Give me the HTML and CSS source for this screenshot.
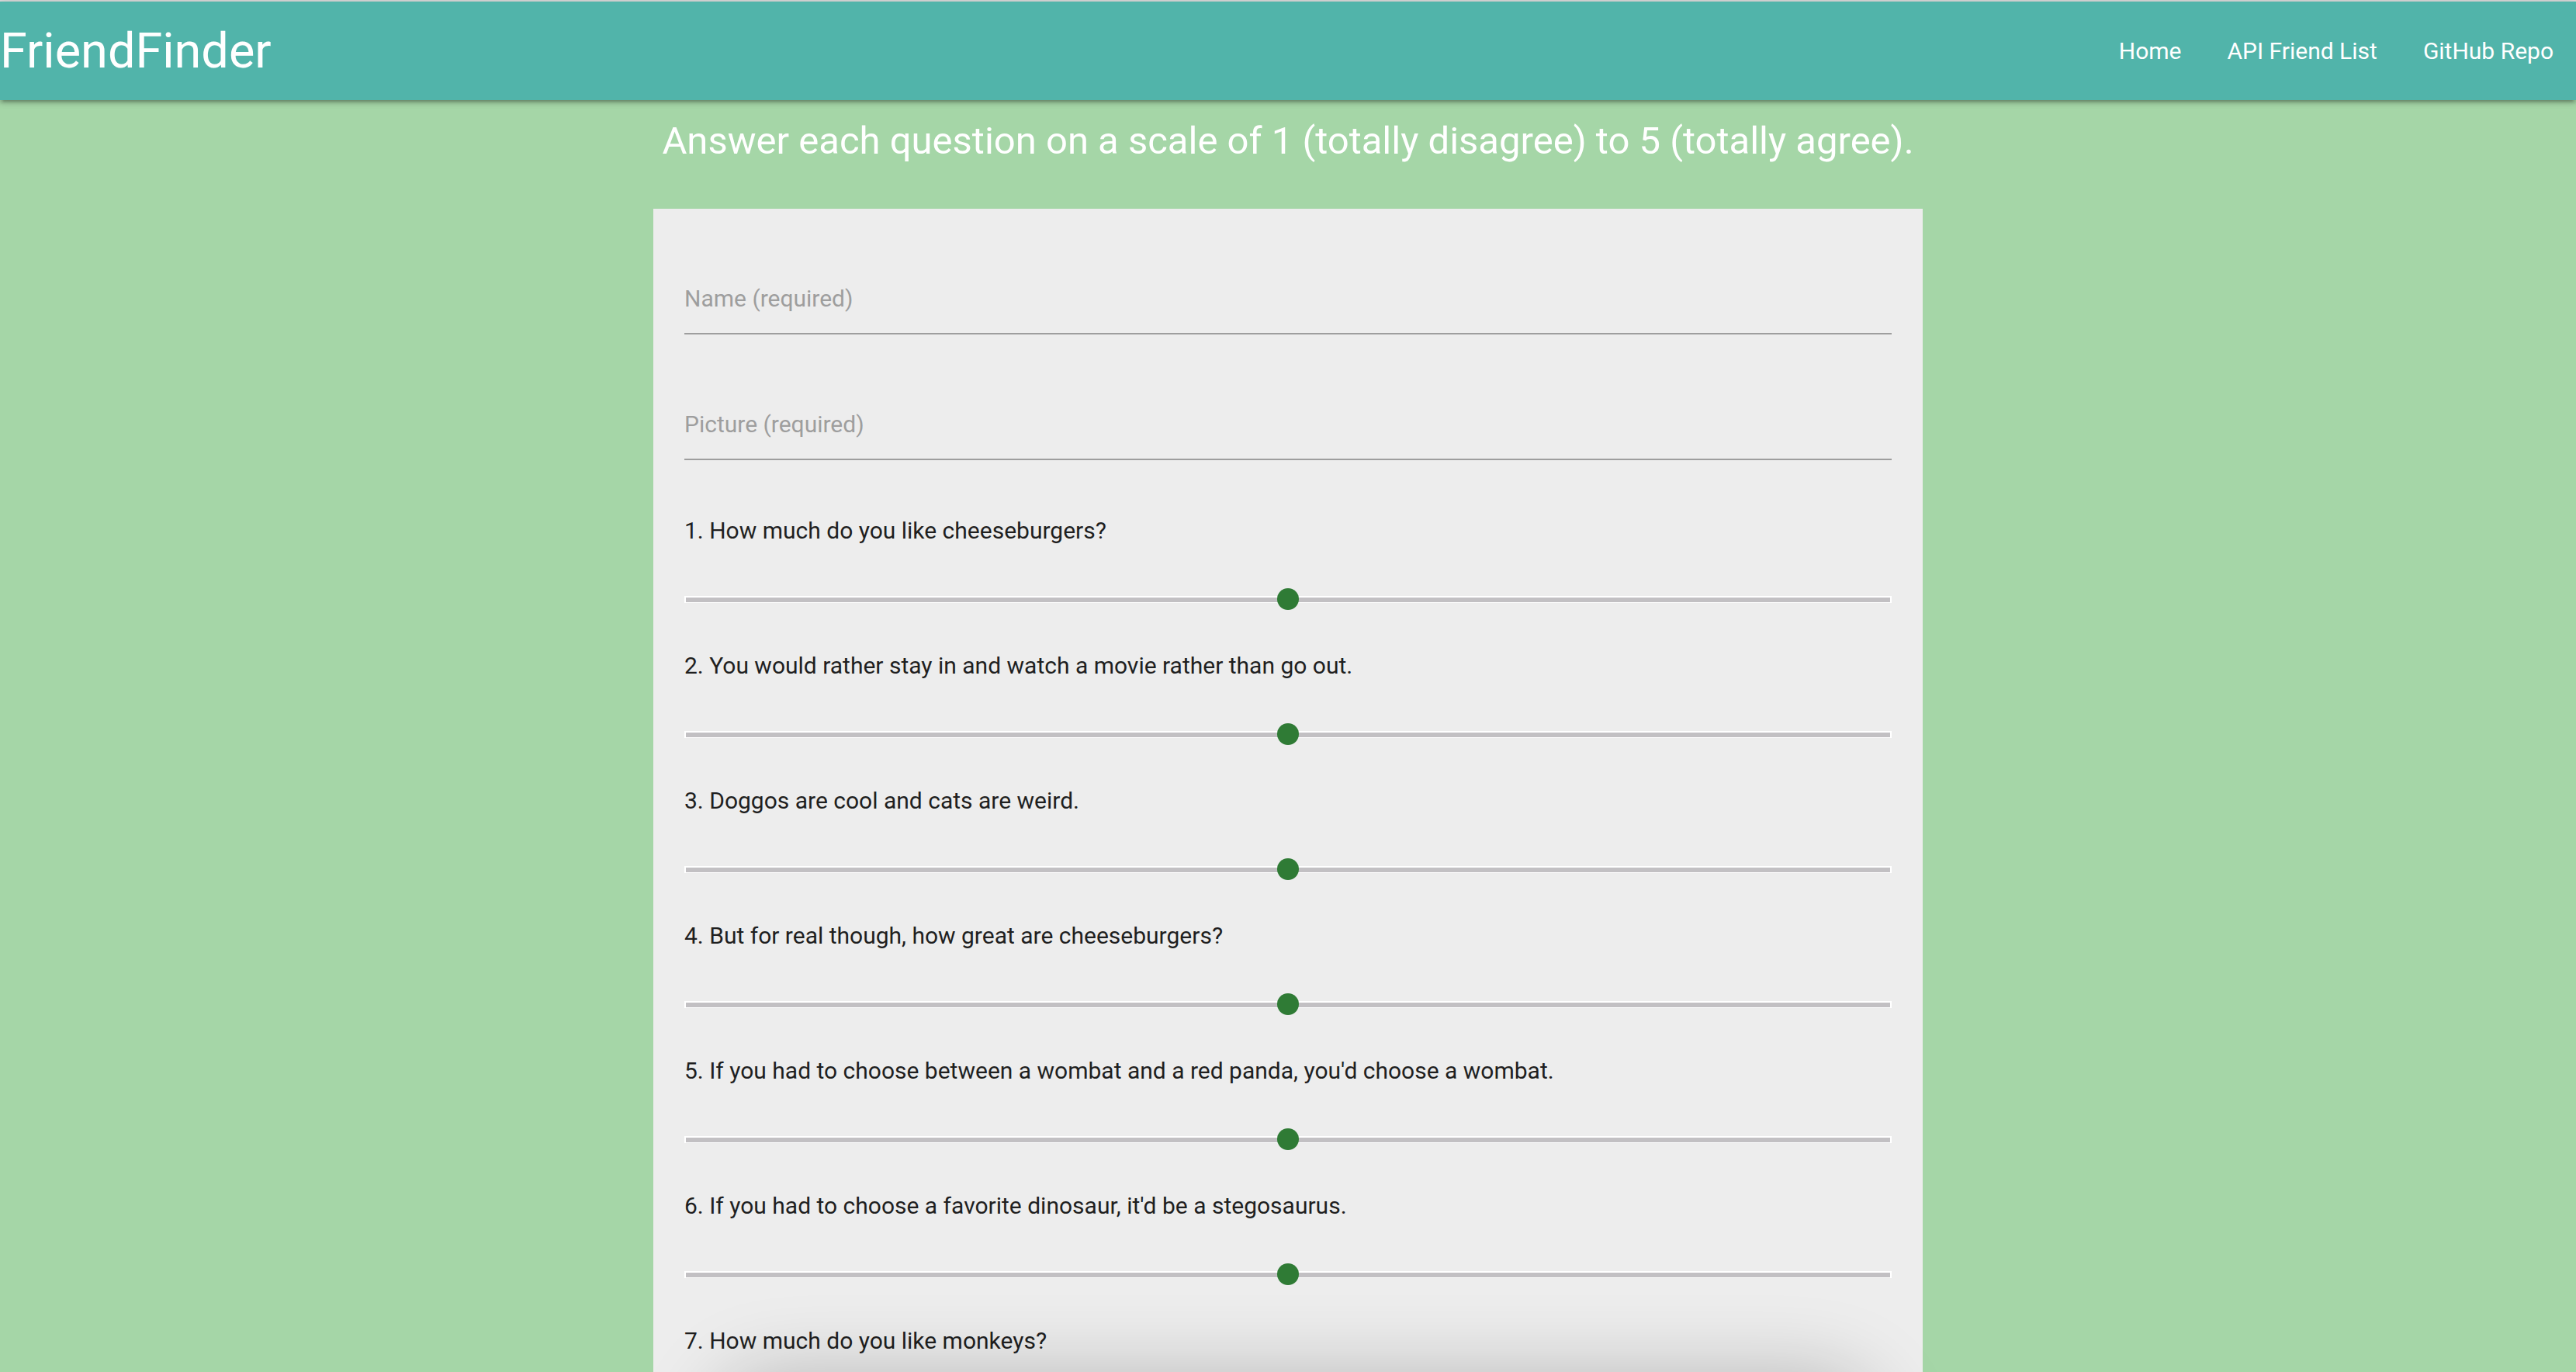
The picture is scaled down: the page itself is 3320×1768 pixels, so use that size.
FILE: index.html
```html
<!DOCTYPE html>
<html lang="en">
<head>
<meta charset="utf-8">
<title>FriendFinder</title>
<link rel="stylesheet" href="styles.css">
</head>
<body>
<div class="topline"></div>
<nav class="navbar">
  <a class="brand" href="#">FriendFinder</a>
  <ul class="nav-links">
    <li><a href="#">Home</a></li>
    <li><a href="#">API Friend List</a></li>
    <li><a href="#">GitHub Repo</a></li>
  </ul>
</nav>
<main class="page">
  <h5 class="intro">Answer each question on a scale of 1 (totally disagree) to 5 (totally agree).</h5>
  <form class="card">
    <div class="field"><span class="field-label">Name (required)</span></div>
    <div class="field"><span class="field-label">Picture (required)</span></div>
    <div class="questions">
      <div class="question">
        <p class="q-label">1. How much do you like cheeseburgers?</p>
        <div class="slider"><div class="track"></div><span class="thumb" style="left: 50%"></span></div>
      </div>
      <div class="question">
        <p class="q-label">2. You would rather stay in and watch a movie rather than go out.</p>
        <div class="slider"><div class="track"></div><span class="thumb" style="left: 50%"></span></div>
      </div>
      <div class="question">
        <p class="q-label">3. Doggos are cool and cats are weird.</p>
        <div class="slider"><div class="track"></div><span class="thumb" style="left: 50%"></span></div>
      </div>
      <div class="question">
        <p class="q-label">4. But for real though, how great are cheeseburgers?</p>
        <div class="slider"><div class="track"></div><span class="thumb" style="left: 50%"></span></div>
      </div>
      <div class="question">
        <p class="q-label">5. If you had to choose between a wombat and a red panda, you'd choose a wombat.</p>
        <div class="slider"><div class="track"></div><span class="thumb" style="left: 50%"></span></div>
      </div>
      <div class="question">
        <p class="q-label">6. If you had to choose a favorite dinosaur, it'd be a stegosaurus.</p>
        <div class="slider"><div class="track"></div><span class="thumb" style="left: 50%"></span></div>
      </div>
      <div class="question">
        <p class="q-label">7. How much do you like monkeys?</p>
        <div class="slider"><div class="track"></div><span class="thumb" style="left: 50%"></span></div>
      </div>
    </div>
    <div class="sheet-shadow"></div>
  </form>
</main>
</body>
</html>
```
FILE: styles.css
```css
html, body {
  height: 100%;
  overflow: hidden;
}
body {
  margin: 0;
  background: #a5d6a7;
  font-family: Roboto, "Noto Sans", Arial, sans-serif;
  color: #1f1f1f;
}
.topline {
  height: 2px;
  background: #dadada;
}
.navbar {
  position: relative;
  z-index: 2;
  height: 127px;
  background: #51b4aa;
  display: flex;
  align-items: center;
  justify-content: space-between;
  box-shadow: 0 4px 4px 0 rgba(0,0,0,0.14), 0 6px 2px -4px rgba(0,0,0,0.12), 0 2px 10px 0 rgba(0,0,0,0.2);
}
.brand {
  color: #fff;
  text-decoration: none;
  font-size: 63px;
  line-height: 127px;
}
.nav-links {
  list-style: none;
  margin: 0;
  padding: 0;
  display: flex;
}
.nav-links a {
  display: block;
  color: #fff;
  text-decoration: none;
  font-size: 30px;
  line-height: 127px;
  padding: 0 29px 0 30px;
}
.page {
  display: flex;
  flex-direction: column;
  align-items: center;
}
.intro {
  margin: 17px 0 51px;
  color: #fff;
  font-weight: 400;
  font-size: 49px;
  line-height: 72px;
  text-align: center;
}
.card {
  position: relative;
  width: 1636px;
  box-sizing: border-box;
  padding: 0 40px;
  background: #ededed;
  display: flex;
  flex-direction: column;
}
.field {
  height: 162px;
  box-sizing: border-box;
  padding-top: 96px;
  border-bottom: 2px solid #9e9e9e;
}
.field-label {
  display: block;
  color: #9e9e9e;
  font-size: 30px;
  line-height: 40px;
}
.questions {
  margin-top: 28px;
  display: flex;
  flex-direction: column;
}
.question {
  height: 174px;
  box-sizing: border-box;
  padding-top: 43px;
}
.q-label {
  margin: 0;
  font-size: 30px;
  line-height: 40px;
  color: #1f1f1f;
}
.slider {
  position: relative;
  height: 28px;
  margin-top: 54px;
  display: flex;
  align-items: center;
}
.track {
  flex: 1;
  height: 6px;
  background: #c2c0c3;
  border: 2px solid #fff;
  border-bottom-width: 1px;
}
.thumb {
  position: absolute;
  top: 0;
  width: 28px;
  height: 28px;
  margin-left: -14px;
  border-radius: 50%;
  background: #2f7b35;
}
.sheet-shadow {
  position: absolute;
  left: 100px;
  right: 80px;
  top: 1525px;
  height: 200px;
  border-radius: 60px;
  box-shadow: 0 0 100px 25px rgba(0,0,0,0.22);
  background: #ededed;
}
```
